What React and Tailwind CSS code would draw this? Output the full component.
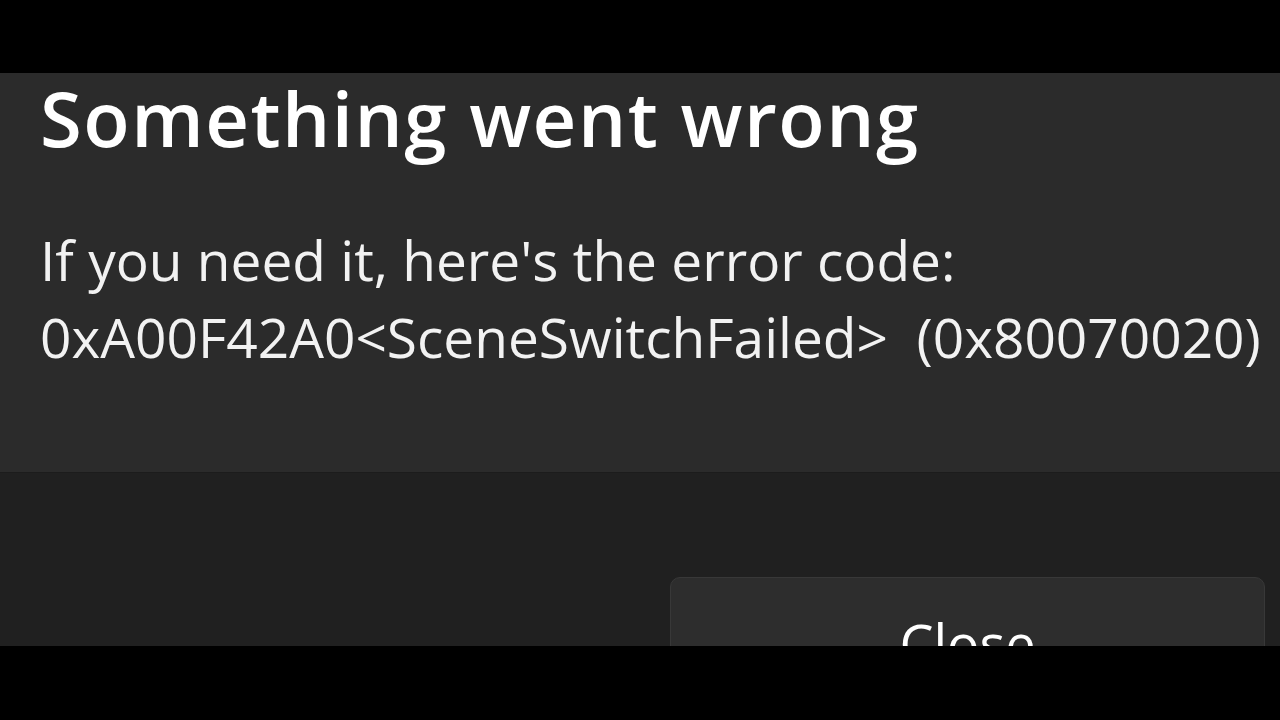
export default function App() {
  return (
    <div className="w-[1280px] h-[720px] bg-black flex flex-col overflow-hidden" style={{ fontFamily: '"Open Sans", "Noto Sans", sans-serif' }}>
      <div className="h-[73px] shrink-0 bg-black" />
      <div className="h-[400px] shrink-0 bg-[#2b2b2b] pl-[40px] text-white border-b border-[#1c1c1c]">
        <h1 className="text-[76px] font-semibold leading-[90px] tracking-[1.5px]">Something went wrong</h1>
        <p className="mt-[58px] text-[55px] leading-[77px] text-[#f2f2f2] whitespace-pre">
          {"If you need it, here's the error code:\n0xA00F42A0<SceneSwitchFailed>  (0x80070020)"}
        </p>
      </div>
      <div className="h-[173px] shrink-0 bg-[#202020] flex justify-end items-start pt-[104px] pr-[15px] overflow-hidden">
        <button className="w-[595px] h-[120px] shrink-0 rounded-[10px] bg-[#2d2d2d] border border-[#383838] text-white text-[54px] leading-none pt-[38px] flex justify-center items-start">
          Close
        </button>
      </div>
      <div className="flex-1 bg-black" />
    </div>
  );
}
